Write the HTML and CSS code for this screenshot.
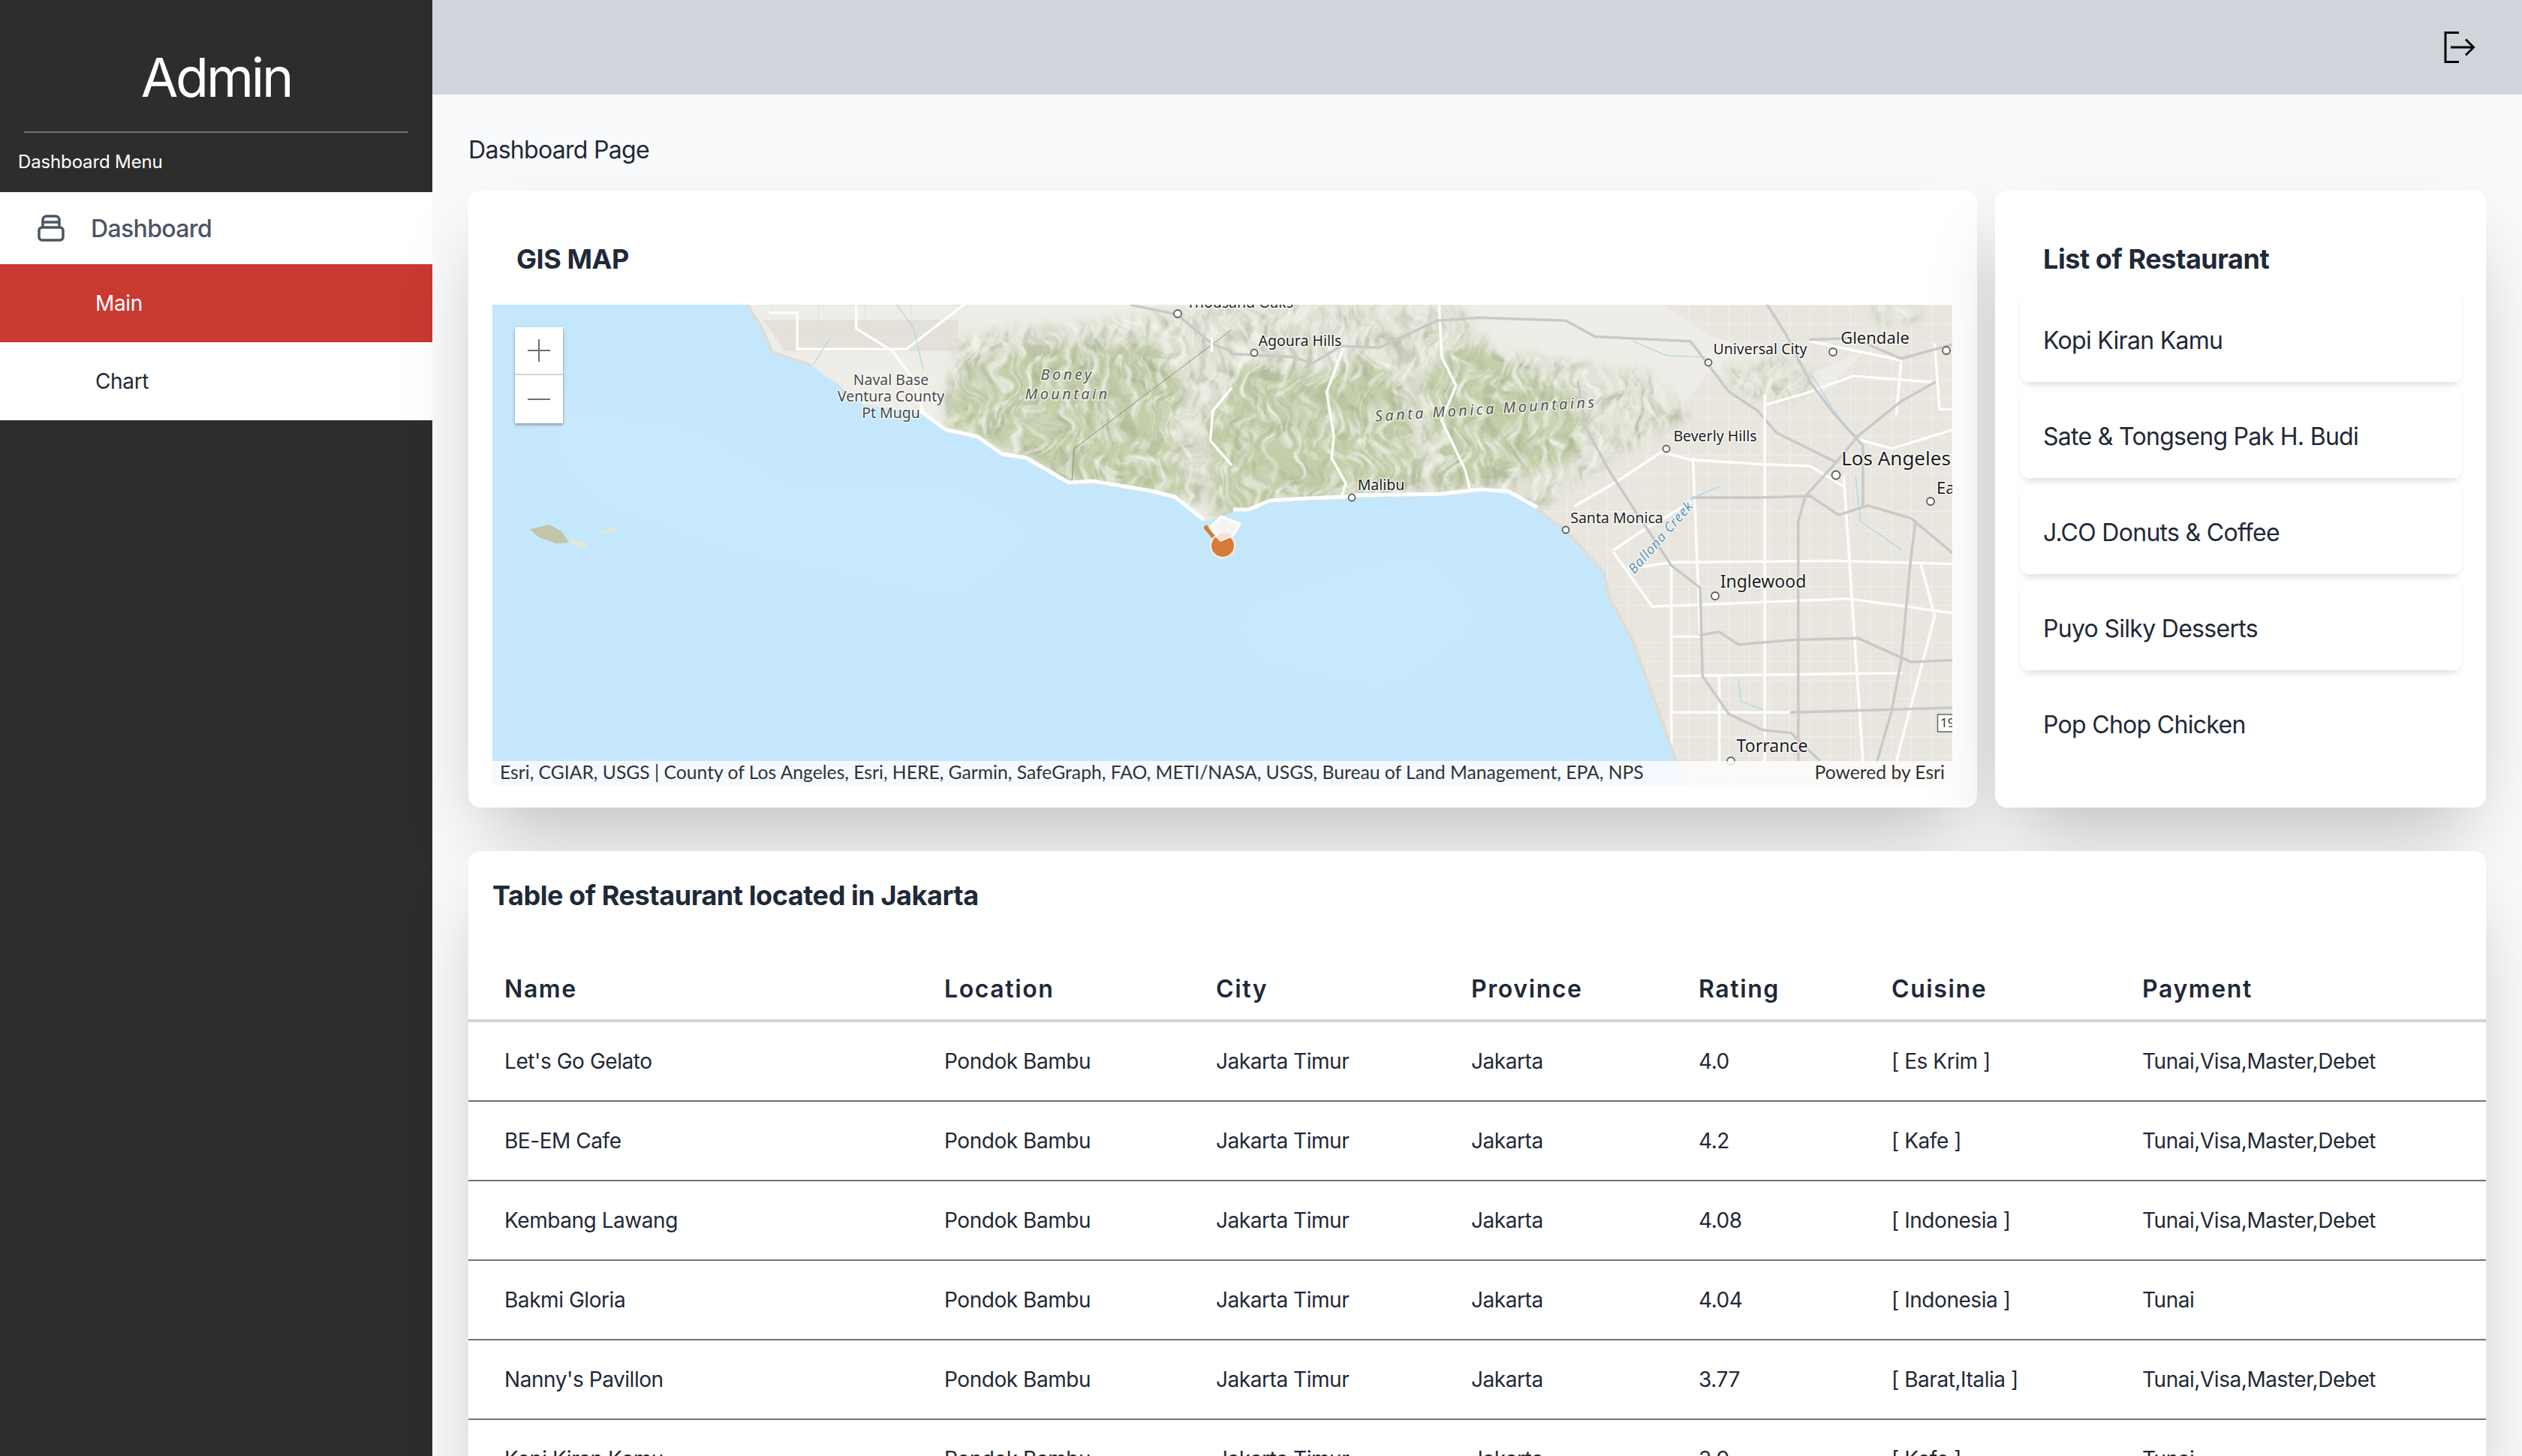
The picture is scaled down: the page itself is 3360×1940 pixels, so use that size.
FILE: index.html
```html
<!DOCTYPE html>
<html lang="en">
<head>
<meta charset="utf-8">
<title>Admin Dashboard</title>
<link rel="stylesheet" href="styles.css">
</head>
<body>
<div class="app">
  <aside class="sidebar">
    <div class="brand">Admin</div>
    <div class="sidebar-rule"></div>
    <div class="menu-label">Dashboard Menu</div>
    <nav class="menu">
      <div class="menu-head">
        <svg class="menu-icon" viewBox="0 0 36 36" aria-hidden="true">
          <rect x="2" y="17" width="32" height="17" rx="4"/>
          <path d="M7 17V7a5 5 0 0 1 5-5h12a5 5 0 0 1 5 5v10M7 10h22"/>
        </svg>
        <span>Dashboard</span>
      </div>
      <a class="menu-item menu-item-active">Main</a>
      <a class="menu-item">Chart</a>
    </nav>
  </aside>
  <div class="main">
    <header class="topbar">
      <svg class="logout" viewBox="0 0 42 42" aria-hidden="true">
        <path d="M20 1.500H2V40.500H20M9 21H39.500M29 10.500L39.500 21L29 31.500"/>
      </svg>
    </header>
    <main class="content">
      <div class="page-title">Dashboard Page</div>
      <section class="top-grid">
        <div class="card map-card">
          <h2 class="card-title map-title">GIS MAP</h2>
          <div class="map">
            <svg class="map-svg" viewBox="0 0 1945 640" aria-label="Map of the Los Angeles coast">
              <defs>
                <clipPath id="land-clip">
                  <path d="M340,0 L360,32 L373,63 L424,80 L459,105 L494,133 L571,145 L603,169 L647,179 L679,202 L711,207 L768,240 L800,238 L877,251 L909,259 L947,289 L971,282 L987,276 L1007,276 L1036,264 L1084,261 L1137,259 L1143,257 L1265,255 L1316,249 L1354,251 L1392,272 L1430,301 L1481,356 L1488,390 L1520,449 L1558,554 L1577,608 L1590,640 L1945,640 L1945,0 Z"/>
                </clipPath>
                <pattern id="street-grid" width="27" height="25" patternUnits="userSpaceOnUse">
                  <path class="street-line" d="M0 0H27M0 0V25"/>
                </pattern>
                <pattern id="farm-grid" width="62" height="40" patternUnits="userSpaceOnUse">
                  <path class="farm-line" d="M0 0H62M0 0V40"/>
                </pattern>
                <filter id="soft-water" x="-20%" y="-20%" width="140%" height="140%">
                  <feGaussianBlur stdDeviation="22"/>
                </filter>
                <filter id="relief" x="-5%" y="-5%" width="110%" height="110%">
                  <feGaussianBlur in="SourceGraphic" stdDeviation="7" result="soft"/>
                  <feTurbulence type="fractalNoise" baseFrequency="0.015 0.02" numOctaves="2" seed="3" result="warp"/>
                  <feTurbulence type="fractalNoise" baseFrequency="0.075 0.028" numOctaves="4" seed="11" result="noise"/>
                  <feDisplacementMap in="noise" in2="warp" scale="70" xChannelSelector="R" yChannelSelector="G" result="noise-warped"/>
                  <feColorMatrix in="noise-warped" type="matrix" values="0 0 0 0 .38  0 0 0 0 .43  0 0 0 0 .28  1.8 0 0 0 -.78" result="shade"/>
                  <feTurbulence type="fractalNoise" baseFrequency="0.09 0.035" numOctaves="3" seed="4" result="noise2"/>
                  <feDisplacementMap in="noise2" in2="warp" scale="70" xChannelSelector="G" yChannelSelector="R" result="noise2-warped"/>
                  <feColorMatrix in="noise2-warped" type="matrix" values="0 0 0 0 .96  0 0 0 0 .96  0 0 0 0 .92  1.8 0 0 0 -.78" result="light"/>
                  <feComposite in="shade" in2="soft" operator="in" result="shade-clip"/>
                  <feComposite in="light" in2="soft" operator="in" result="light-clip"/>
                  <feMerge>
                    <feMergeNode in="soft"/>
                    <feMergeNode in="shade-clip"/>
                    <feMergeNode in="light-clip"/>
                  </feMerge>
                </filter>
              </defs>

              <rect class="water" width="1945" height="640"/>
              <g filter="url(#soft-water)">
                <path class="water-light" d="M50,130 L280,160 L400,240 L600,230 L740,300 L620,400 L300,330 L120,260 Z"/>
                <path class="water-light" d="M980,400 L1240,320 L1330,420 L1200,520 L1010,480 Z"/>
              </g>

              <g clip-path="url(#land-clip)">
                <rect class="land" width="1945" height="640"/>
                <path class="urban" d="M1300,250 L1370,200 L1560,170 L1620,90 L1760,130 L1830,60 L1945,30 L1945,640 L1590,640 L1558,554 L1520,449 L1488,390 L1430,301 L1392,272 Z"/>
                <path class="urban-grid" d="M1300,250 L1370,200 L1560,170 L1620,90 L1760,130 L1830,60 L1945,30 L1945,640 L1590,640 L1558,554 L1520,449 L1488,390 L1430,301 L1392,272 Z"/>
                <path class="farm" d="M360,20 H620 V62 H390 Z"/>
                <path class="farm-overlay" d="M360,0 H630 V62 H390 Z"/>
                <path class="urban" d="M1560,0 H1945 V30 L1830,60 L1760,90 L1680,60 L1620,40 Z"/>
                <path class="urban-grid" d="M1560,0 H1945 V30 L1830,60 L1760,90 L1680,60 L1620,40 Z"/>

                <g filter="url(#relief)">
                  <path class="hill-pale" d="M620,40 L1000,0 L1290,0 L1330,60 L1540,90 L1600,150 L1500,200 L1400,270 L1000,280 L700,210 L600,130 Z"/>
                  <path class="hill-pale" d="M1820,0 H1900 V22 L1840,28 Z"/>
                  <path class="hill-pale" d="M1640,80 L1740,70 L1770,118 L1700,130 L1650,110 Z"/>
                  <path class="hill-green" d="M610,118 L650,70 L730,55 L880,50 L920,110 L905,180 L940,260 L880,250 L768,238 L712,206 L648,180 L606,164 Z"/>
                  <path class="hill-green" d="M950,150 L1000,80 L1100,90 L1180,70 L1220,130 L1240,240 L1150,252 L1085,258 L1000,275 L960,285 Z"/>
                  <path class="hill-green" d="M1240,100 L1290,50 L1340,70 L1420,110 L1460,150 L1440,210 L1330,236 L1255,245 Z"/>
                </g>

                <g transform="translate(-16,-6) scale(.6378,.4209)">
                  <path class="road-white" d="M605,40 H662 V155 H890 L1010,14"/>
                  <path class="road-white" d="M785,14 V90 L860,160 L900,240 L925,350"/>
                  <path class="road-white" d="M1568,280 L1530,350 L1525,445 L1568,520"/>
                  <path class="road-grey" d="M1360,15 L1455,45 L1530,140 L1568,160"/>
                  <path class="line-thin" d="M1568,95 L1240,470 L1235,590"/>
                  <path class="water-line" d="M870,14 L905,90 L925,220"/>
                  <path class="water-line" d="M730,120 L695,205"/>
                </g>

                <g transform="translate(984,-6) scale(.6378,.4209)">
                  <path class="road-white" d="M435,14 L440,180 L470,270 L440,380 L490,540 L500,605"/>
                  <path class="road-white" d="M235,150 L200,290 L215,430 L210,500 L240,580 L230,625"/>
                  <path class="road-white" d="M-40,120 V160"/>
                  <path class="road-grey" d="M0,170 L130,180 L170,200 L230,145 L310,150 L430,65 L520,55 L700,65 L760,115 L960,130 L1040,290 L1100,350 L1140,420 L1260,510"/>
                  <path class="road-white" d="M720,650 L810,570 L900,480 L960,505 L1115,520 L1210,525 L1280,590"/>
                  <path class="road-white" d="M800,790 L870,720 L960,640"/>
                  <path class="road-white" d="M830,850 L920,830 L1260,825 L1507,835"/>
                  <path class="road-white" d="M800,800 L880,970 L1290,945 L1507,990"/>
                  <path class="road-white" d="M920,1065 H980"/>
                  <path class="road-white" d="M925,1190 L1400,1180"/>
                  <path class="road-white" d="M920,1305 H1170"/>
                  <path class="road-white" d="M1115,300 V1458"/>
                  <path class="road-white" d="M965,500 L980,1060"/>
                  <path class="road-white" d="M1280,560 L1320,1458"/>
                  <path class="road-white" d="M920,830 V1458"/>
                  <path class="road-white" d="M1020,1190 V1458"/>
                  <path class="road-white" d="M1440,830 L1470,1000 L1390,1458"/>
                  <path class="road-white" d="M1507,410 L1380,470 L1310,440"/>
                  <path class="road-white" d="M1210,130 L1400,190 L1390,360"/>
                  <path class="road-white" d="M1120,330 L1200,295 L1300,240 L1470,260"/>
                  <path class="road-white" d="M1507,345 H1480 L1470,140"/>
                  <path class="road-grey" d="M725,260 L740,400 L790,540 L850,680 L920,840 L980,910 L985,1190 L1040,1310 L1110,1360 L1170,1370 L1230,1458"/>
                  <path class="road-grey" d="M965,625 L1100,625 L1210,620 L1270,680 L1330,650 L1420,690 L1507,800"/>
                  <path class="road-grey" d="M1185,1458 V700 L1200,620 L1260,520 L1310,430 L1400,320 L1470,260"/>
                  <path class="road-grey" d="M980,1060 L1020,1050 L1060,1090 L1180,1075 L1310,1070 L1420,1145 L1507,1140"/>
                  <path class="road-grey" d="M1120,14 L1160,110 L1210,260 L1260,360 L1320,460 L1320,650"/>
                  <path class="road-grey" d="M1210,125 L1300,120 L1400,185 L1507,140"/>
                  <path class="road-grey" d="M1170,1305 L1507,1290"/>
                  <path class="road-grey" d="M1430,700 L1420,820 L1400,1140 L1380,1300 L1350,1458"/>
                  <path class="water-line" d="M1305,560 L1315,700 L1400,790"/>
                  <path class="water-line" d="M1060,1200 L1065,1270 L1110,1295"/>
                  <path class="water-line" d="M840,130 L910,175 L990,180"/>
                  <path class="water-line" d="M1210,230 L1260,350 L1290,410"/>
                  <path class="water-line" d="M1020,590 L960,630"/>
                </g>
              </g>

              <path class="beach" d="M1392,272 L1430,301 L1481,356 L1488,390 L1520,449 L1558,554 L1577,608 L1590,640"/>
              <path class="coast-road" d="M340,0 L360,32 L373,63 L424,80"/>
              <path class="coast-road-main" d="M568,140 L603,166 L647,176 L679,199 L711,204 L768,237 L800,235 L877,248 L909,256 L947,286 M987,273 L1007,273 L1036,261 L1084,258 L1137,256 L1143,254 L1265,252 L1316,246 L1354,249 L1392,270"/>
              <path class="marina" d="M1447,363 L1476,352 L1478,378 L1462,376 L1468,400 L1458,396 Z"/>

              <g>
                <path class="island" d="M50,299 L76,293 L92,302 L102,317 L85,318 L62,310 Z"/>
                <path class="island-pale" d="M102,317 L118,323 L122,324 L130,316 L144,307 L172,296 L155,298 L138,310 L127,318 L105,313 Z"/>
              </g>

              <path class="pin-handle" d="M951,297 L966,315"/>
              <circle class="pin-dot" cx="973" cy="321" r="16"/>
              <path class="pin-cone" d="M956,297 L971,282 L996,292 L987,307 L970,314 Z"/>
              <path class="pin-segment" d="M963,310 Q973,300 985,308 L970,314 Z"/>

              <circle class="place" cx="913" cy="12" r="5"/>
              <circle class="place" cx="1015" cy="64" r="4.500"/>
              <circle class="place" cx="1620" cy="77" r="4.500"/>
              <circle class="place" cx="1786" cy="63" r="5"/>
              <circle class="place" cx="1937" cy="61" r="5"/>
              <circle class="place" cx="1564" cy="192" r="4.500"/>
              <circle class="place" cx="1790" cy="227" r="5.500"/>
              <circle class="place" cx="1916" cy="262" r="5"/>
              <circle class="place" cx="1145" cy="257" r="4.500"/>
              <circle class="place" cx="1430" cy="300" r="4.500"/>
              <circle class="place" cx="1629" cy="388" r="5"/>
              <circle class="place" cx="1650" cy="608" r="5"/>

              <text class="lbl lbl-grey" x="531" y="107">Naval Base</text>
              <text class="lbl lbl-grey" x="531" y="129">Ventura County</text>
              <text class="lbl lbl-grey" x="531" y="151">Pt Mugu</text>
              <text class="lbl-range" x="766" y="100">Boney</text>
              <text class="lbl-range" x="766" y="126">Mountain</text>
              <text class="lbl-range" transform="translate(1324,146) rotate(-3.700)">Santa Monica Mountains</text>
              <text class="lbl lbl-start" x="925" y="4">Thousand Oaks</text>
              <text class="lbl" x="1076" y="55">Agoura Hills</text>
              <text class="lbl" x="1689" y="66">Universal City</text>
              <text class="lbl lbl-md" x="1842" y="52">Glendale</text>
              <text class="lbl" x="1629" y="182">Beverly Hills</text>
              <text class="lbl lbl-lg" x="1870" y="214">Los Angeles</text>
              <text class="lbl lbl-md lbl-start" x="1924" y="252">East</text>
              <text class="lbl" x="1184" y="247">Malibu</text>
              <text class="lbl" x="1498" y="291">Santa Monica</text>
              <text class="lbl lbl-lg-city" x="1693" y="377">Inglewood</text>
              <text class="lbl lbl-lg-city" x="1705" y="596">Torrance</text>
              <text class="lbl-creek" transform="translate(1561,314) rotate(-49)">Ballona Creek</text>

              <rect class="shield" x="1925.500" y="546" width="30" height="23"/>
              <text class="lbl-shield" x="1929" y="563">19</text>
            </svg>
            <div class="zoom-control">
              <div class="zoom-btn zoom-plus"><svg viewBox="0 0 32 32" aria-hidden="true"><path d="M16 1V31M1 16H31"/></svg></div>
              <div class="zoom-btn"><svg viewBox="0 0 32 32" aria-hidden="true"><path d="M1 16H31"/></svg></div>
            </div>
            <div class="attribution">
              <span class="attribution-text">Esri, CGIAR, USGS | County of Los Angeles, Esri, HERE, Garmin, SafeGraph, FAO, METI/NASA, USGS, Bureau of Land Management, EPA, NPS</span>
              <span class="attribution-text">Powered by Esri</span>
            </div>
          </div>
        </div>
        <div class="card list-card">
          <h2 class="card-title list-title">List of Restaurant</h2>
          <ul class="restaurant-list">
            <li>Kopi Kiran Kamu</li>
            <li>Sate &amp; Tongseng Pak H. Budi</li>
            <li>J.CO Donuts &amp; Coffee</li>
            <li>Puyo Silky Desserts</li>
            <li>Pop Chop Chicken</li>
          </ul>
        </div>
      </section>
      <section class="card table-card">
        <h2 class="card-title table-title">Table of Restaurant located in Jakarta</h2>
        <table class="data-table">
          <colgroup>
            <col class="c-name"><col class="c-location"><col class="c-city"><col class="c-province"><col class="c-rating"><col class="c-cuisine"><col class="c-payment">
          </colgroup>
          <thead>
            <tr><th>Name</th><th>Location</th><th>City</th><th>Province</th><th>Rating</th><th>Cuisine</th><th>Payment</th></tr>
          </thead>
          <tbody>
            <tr><td>Let's Go Gelato</td><td>Pondok Bambu</td><td>Jakarta Timur</td><td>Jakarta</td><td>4.0</td><td>[ Es Krim ]</td><td>Tunai,Visa,Master,Debet</td></tr>
            <tr><td>BE-EM Cafe</td><td>Pondok Bambu</td><td>Jakarta Timur</td><td>Jakarta</td><td>4.2</td><td>[ Kafe ]</td><td>Tunai,Visa,Master,Debet</td></tr>
            <tr><td>Kembang Lawang</td><td>Pondok Bambu</td><td>Jakarta Timur</td><td>Jakarta</td><td>4.08</td><td>[ Indonesia ]</td><td>Tunai,Visa,Master,Debet</td></tr>
            <tr><td>Bakmi Gloria</td><td>Pondok Bambu</td><td>Jakarta Timur</td><td>Jakarta</td><td>4.04</td><td>[ Indonesia ]</td><td>Tunai</td></tr>
            <tr><td>Nanny's Pavillon</td><td>Pondok Bambu</td><td>Jakarta Timur</td><td>Jakarta</td><td>3.77</td><td>[ Barat,Italia ]</td><td>Tunai,Visa,Master,Debet</td></tr>
            <tr><td>Kopi Kiran Kamu</td><td>Pondok Bambu</td><td>Jakarta Timur</td><td>Jakarta</td><td>3.9</td><td>[ Kafe ]</td><td>Tunai</td></tr>
          </tbody>
        </table>
      </section>
    </main>
  </div>
</div>
</body>
</html>
```
FILE: styles.css
```css
* { box-sizing: border-box; }
html, body { margin: 0; height: 100%; overflow: hidden; }
body { font-family: Inter, "Liberation Sans", sans-serif; color: #1f2937; background: #f9fafb; }

.app { display: flex; height: 1940px; overflow: hidden; }

/* Sidebar */
.sidebar { flex: 0 0 576px; background: #2d2d2d; color: #fff; }
.brand { height: 175px; padding-top: 60px; text-align: center; font-size: 72px; line-height: 86px; font-weight: 400; letter-spacing: -.045em; }
.sidebar-rule { height: 2px; margin: 0 32px; background: #6b7280; }
.menu-label { height: 79px; padding: 19px 24px 0; font-size: 24px; line-height: 40px; letter-spacing: -.006em; }
.menu { background: #fff; }
.menu-head { display: flex; align-items: center; gap: 35px; height: 96px; padding-left: 50px; font-size: 32px; color: #4b5563; font-weight: 500; letter-spacing: -.02em; }
.menu-icon { width: 36px; height: 36px; fill: none; stroke: #4b5563; stroke-width: 3.500; }
.menu-item { display: flex; align-items: center; height: 104px; padding-left: 127px; font-size: 28px; color: #1f2937; letter-spacing: -.012em; }
.menu-item-active { background: #c93a31; color: #fff; }

/* Main */
.main { flex: 1; min-width: 0; }
.topbar { display: flex; justify-content: flex-end; align-items: center; height: 126px; padding-right: 62px; background: #d1d5db; }
.logout { width: 42px; height: 42px; fill: none; stroke: #000; stroke-width: 3; }
.content { padding: 50px 48px 0; }
.page-title { font-size: 32px; line-height: 48px; margin-bottom: 30px; letter-spacing: -.022em; }
.top-grid { display: grid; grid-template-columns: 1fr 654px; gap: 24px; margin-bottom: 58px; }

.card { background: #fff; border-radius: 16px; box-shadow: 0 50px 100px -24px rgba(0, 0, 0, .25); }
.card-title { margin: 0; font-size: 36px; line-height: 54px; font-weight: 700; color: #1f2937; letter-spacing: -.012em; }

/* Map card */
.map-card { padding: 64px 33px 30px 32px; }
.map-title { padding-left: 32px; margin-bottom: 34px; }
.map { position: relative; height: 640px; overflow: hidden; }
.map-svg { display: block; width: 1945px; height: 640px; }
.zoom-control { position: absolute; left: 30px; top: 30px; width: 64px; background: #fff; box-shadow: 0 2px 4px rgba(0, 0, 0, .35); }
.zoom-btn { display: flex; align-items: center; justify-content: center; height: 64px; }
.zoom-plus { border-bottom: 2px solid #d4d4d4; }
.zoom-btn svg { width: 32px; height: 32px; fill: none; stroke: #6e6e6e; stroke-width: 2; }
.attribution { position: absolute; left: 0; right: 0; bottom: 0; display: flex; justify-content: space-between; align-items: center; height: 32px; padding: 0 10px 3px; background: rgba(255, 255, 255, .8); }
.attribution-text { font-family: Lato, "Open Sans", sans-serif; font-size: 24.700px; line-height: 28px; font-weight: 400; color: #323232; white-space: nowrap; }

/* Map drawing */
.water { fill: #c5e7fc; }
.water-light { fill: #c9e9fc; }
.land { fill: #eeede7; }
.urban { fill: #e8e6df; }
.urban-grid { fill: url(#street-grid); }
.street-line { fill: none; stroke: #f6f5f1; stroke-width: 1.200; }
.farm { fill: #e3e1da; }
.farm-overlay { fill: url(#farm-grid); }
.farm-line { fill: none; stroke: #dcdad3; stroke-width: 1; }
.hill-green { fill: #c3cfa9; }
.hill-pale { fill: #e2e2d6; }
.road-white, .road-grey, .line-thin, .water-line { fill: none; vector-effect: non-scaling-stroke; stroke-linejoin: round; stroke-linecap: round; }
.road-white { stroke: #fdfdfb; stroke-width: 3.500; }
.road-grey { stroke: #c9c9c7; stroke-width: 3.500; }
.line-thin { stroke: #8d9285; stroke-width: 1; }
.water-line { stroke: #a9d6e6; stroke-width: 1.200; }
.beach { fill: none; stroke: #dfddd2; stroke-width: 4; }
.coast-road { fill: none; stroke: #dedcd2; stroke-width: 3; }
.coast-road-main { fill: none; stroke: #fff; stroke-width: 5; stroke-linejoin: round; }
.marina { fill: #c5e7fc; }
.island { fill: #c2c5a6; }
.island-pale { fill: #e6e8d2; }
.pin-handle { fill: none; stroke: #d77b3a; stroke-width: 6; stroke-linecap: round; }
.pin-dot { fill: #d77b3a; stroke: #f6f0e8; stroke-width: 2; }
.pin-cone { fill: #f5f5f1; stroke: #fff; stroke-width: 3; stroke-linejoin: round; }
.pin-segment { fill: #f6dfd3; }
.place { fill: #fff; stroke: #5f5f5f; stroke-width: 1.800; }

.lbl { font-family: "Noto Sans", "Open Sans", sans-serif; font-size: 19.500px; fill: #1e1e1e; text-anchor: middle; paint-order: stroke; stroke: rgba(255, 255, 255, .75); stroke-width: 3px; stroke-linejoin: round; }
.lbl-grey { fill: #4a4a4a; }
.lbl-md { font-size: 22px; }
.lbl-lg-city { font-size: 23px; }
.lbl-lg { font-size: 26px; }
.lbl-start { text-anchor: start; }
.lbl-range { font-family: "Noto Sans", "Open Sans", sans-serif; font-style: italic; font-size: 20px; letter-spacing: 3.400px; fill: #55584f; text-anchor: middle; paint-order: stroke; stroke: rgba(255, 255, 255, .7); stroke-width: 3px; }
.lbl-creek { font-family: "Noto Sans", "Open Sans", sans-serif; font-style: italic; font-size: 18px; letter-spacing: .8px; fill: #5f97b5; text-anchor: middle; paint-order: stroke; stroke: rgba(255, 255, 255, .7); stroke-width: 2.500px; }
.shield { fill: #fff; stroke: #666; stroke-width: 1.500; }
.lbl-shield { font-family: "Noto Sans", sans-serif; font-size: 17px; fill: #333; }

/* Restaurant list */
.list-card { padding: 64px 32px 0 33px; }
.list-title { padding-left: 31px; margin-bottom: 9px; }
.restaurant-list { margin: 0; padding: 0; list-style: none; }
.restaurant-list li { height: 128px; padding: 49px 31px 0; font-size: 32px; line-height: 48px; letter-spacing: -.022em; border-radius: 12px; box-shadow: 0 8px 12px -6px rgba(0, 0, 0, .14), 0 6px 14px -6px rgba(0, 0, 0, .05); }
.restaurant-list li:last-child { box-shadow: none; }

/* Table */
.table-card { position: relative; padding-top: 32px; }
.table-title { padding-left: 32px; margin-bottom: 42px; }
.data-table { width: 100%; table-layout: fixed; border-collapse: separate; border-spacing: 0; }
.c-name { width: 586px; }
.c-location { width: 362px; }
.c-city { width: 340px; }
.c-province { width: 303px; }
.c-rating { width: 257px; }
.c-cuisine { width: 334px; }
.c-payment { width: 506px; }
.data-table th { padding: 32px 0 16px 48px; height: 100px; text-align: left; font-size: 32px; line-height: 48px; font-weight: 600; letter-spacing: 1.600px; border-bottom: 4px solid #d1d5db; }
.data-table td { height: 106px; padding: 0 0 0 48px; font-size: 28px; letter-spacing: -.016em; border-bottom: 2px solid #6b7280; white-space: nowrap; }
```
